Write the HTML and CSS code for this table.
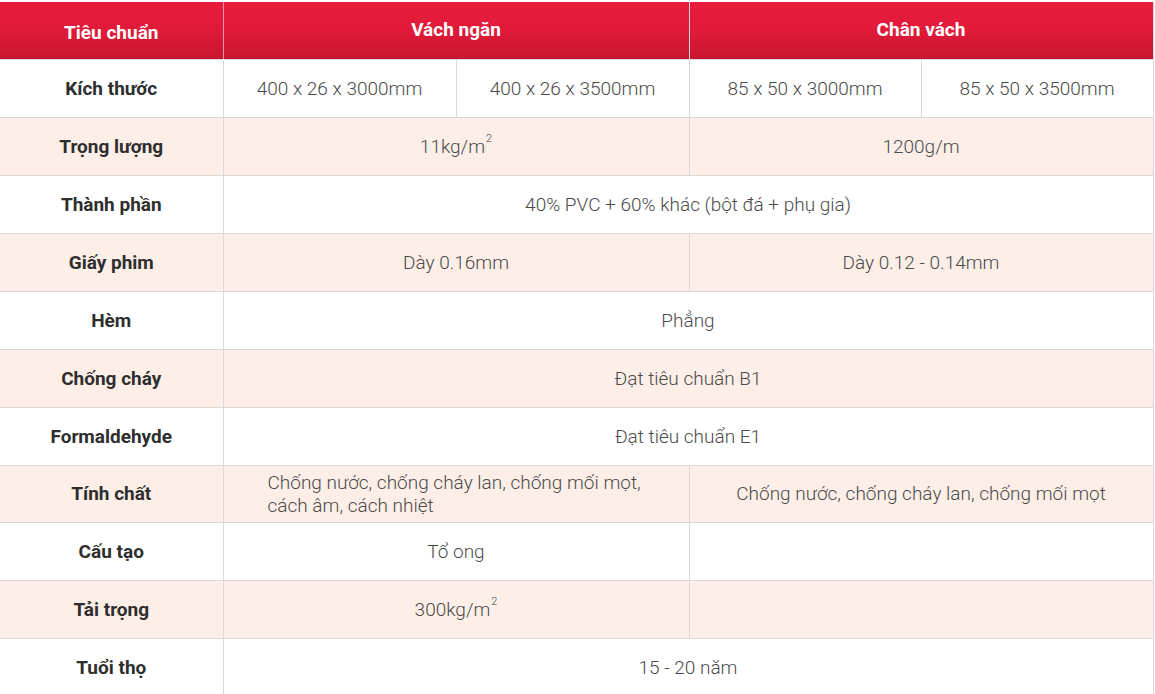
FILE: index.html
```html
<!DOCTYPE html>
<html lang="vi">
<head>
<meta charset="utf-8">
<link rel="stylesheet" href="styles.css">
</head>
<body>
<table class="spec">
  <colgroup>
    <col class="c-label">
    <col class="c-val">
    <col class="c-val">
    <col class="c-val2">
    <col class="c-val2">
  </colgroup>
  <thead>
    <tr class="head">
      <th class="h-first">Tiêu chuẩn</th>
      <th colspan="2" class="h-up">Vách ngăn</th>
      <th colspan="2" class="h-up">Chân vách</th>
    </tr>
  </thead>
  <tbody>
    <tr>
      <th>Kích thước</th>
      <td>400 x 26 x 3000mm</td>
      <td>400 x 26 x 3500mm</td>
      <td>85 x 50 x 3000mm</td>
      <td>85 x 50 x 3500mm</td>
    </tr>
    <tr class="alt">
      <th>Trọng lượng</th>
      <td colspan="2">11kg/m<sup>2</sup></td>
      <td colspan="2">1200g/m</td>
    </tr>
    <tr>
      <th>Thành phần</th>
      <td colspan="4">40% PVC + 60% khác (bột đá + phụ gia)</td>
    </tr>
    <tr class="alt">
      <th>Giấy phim</th>
      <td colspan="2">Dày 0.16mm</td>
      <td colspan="2">Dày 0.12 - 0.14mm</td>
    </tr>
    <tr>
      <th>Hèm</th>
      <td colspan="4">Phẳng</td>
    </tr>
    <tr class="alt">
      <th>Chống cháy</th>
      <td colspan="4">Đạt tiêu chuẩn B1</td>
    </tr>
    <tr>
      <th>Formaldehyde</th>
      <td colspan="4">Đạt tiêu chuẩn E1</td>
    </tr>
    <tr class="alt short">
      <th>Tính chất</th>
      <td colspan="2" class="wrap">Chống nước, chống cháy lan, chống mối mọt, cách âm, cách nhiệt</td>
      <td colspan="2">Chống nước, chống cháy lan, chống mối mọt</td>
    </tr>
    <tr>
      <th>Cấu tạo</th>
      <td colspan="2">Tổ ong</td>
      <td colspan="2"></td>
    </tr>
    <tr class="alt">
      <th>Tải trọng</th>
      <td colspan="2">300kg/m<sup>2</sup></td>
      <td colspan="2"></td>
    </tr>
    <tr>
      <th>Tuổi thọ</th>
      <td colspan="4">15 - 20 năm</td>
    </tr>
  </tbody>
</table>
</body>
</html>
```

FILE: styles.css
```css
html, body {
  margin: 0;
  padding: 0;
  background: #ffffff;
}

body {
  font-family: Roboto, "Liberation Sans", Arial, sans-serif;
  padding-top: 2px;
}

.spec {
  border-collapse: collapse;
  table-layout: fixed;
  width: 1153px;
  font-size: 19px;
}

.c-label { width: 223px; }
.c-val { width: 233px; }
.c-val2 { width: 232px; }

.spec th,
.spec td {
  height: 58px;
  padding: 0;
  text-align: center;
  vertical-align: middle;
  border: 1px solid #d9d9d9;
  box-sizing: border-box;
}

.spec tr.short th,
.spec tr.short td {
  height: 57px;
}

.spec tr > :first-child {
  border-left: none;
}

.spec tbody th {
  font-weight: 700;
  color: #2e2e2e;
}

.spec tbody td {
  font-weight: 300;
  color: #4a4a4a;
}

.spec tr.alt th,
.spec tr.alt td {
  background: #fdefe7;
}

.spec .head th {
  height: 57px;
  color: #ffffff;
  font-weight: 700;
  background: linear-gradient(to bottom, #e81b3c 0%, #e21a39 45%, #c8162f 100%);
  border: none;
  border-left: 1px solid rgba(255, 255, 255, 0.55);
  border-right: 1px solid #d9d9d9;
}

.spec .head th.h-first {
  border-left: none;
  border-right: 1px solid rgba(255, 255, 255, 0.55);
  padding-top: 5px;
}

.spec .head th.h-up {
  padding-bottom: 2px;
}

.spec .head th:last-child {
  border-right: 1px solid #d9d9d9;
}

.spec td.wrap {
  text-align: left;
  padding: 0 36px 0 44px;
  line-height: 23px;
}

.spec sup {
  font-size: 11px;
  vertical-align: top;
  position: relative;
  top: -3px;
  margin-left: 1px;
}
```
